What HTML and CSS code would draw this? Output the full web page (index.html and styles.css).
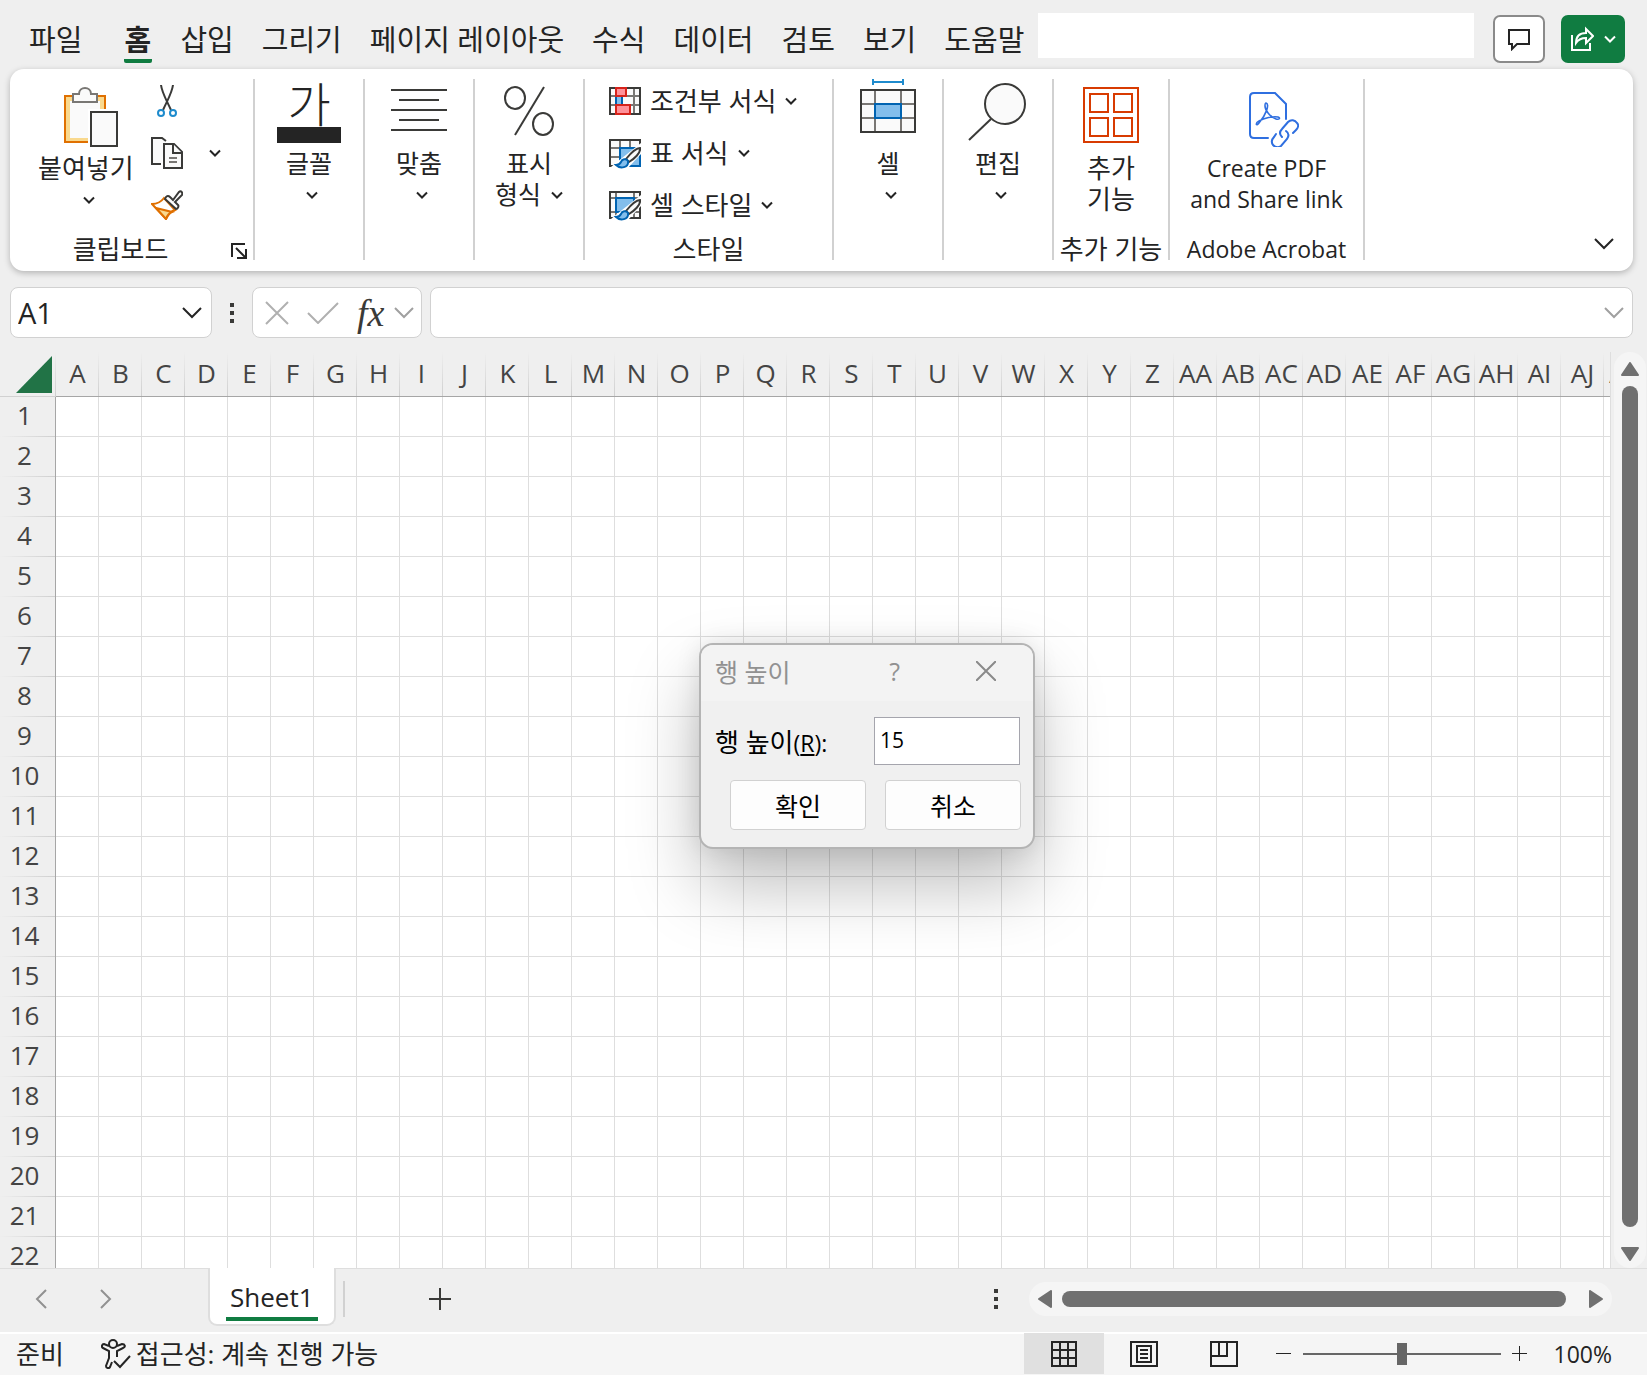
FILE: index.html
```html
<!DOCTYPE html>
<html lang="ko">
<head>
  <meta charset="UTF-8" />
  <meta name="viewport" content="width=device-width, initial-scale=1.0" />
  <title>Excel</title>
  <link rel="stylesheet" href="styles.css">
</head>
<body>
  <svg class="defs" aria-hidden="true">
    <symbol id="caret" viewBox="0 0 12 8"><path d="M1 1.5l5 5 5-5" fill="none" stroke="currentColor" stroke-width="2"/></symbol>
    <symbol id="chevron" viewBox="0 0 20 12"><path d="M1 1l9 9 9-9" fill="none" stroke="currentColor" stroke-width="2"/></symbol>
    <symbol id="brush" viewBox="0 0 32 32">
      <path d="M32 6L8 25l-6 5 16 2 14-15z" fill="#fff"/>
      <path d="M31 11c-4 0-10 6-14 11l3 3c5-3 12-9 11-14z" fill="#fafafa" stroke="#3a3a38" stroke-width="2"/>
      <path d="M19 24c-2-3-6-2-7 1-1 2-3 3-5 3 4 4 13 3 12-4z" fill="#83beec" stroke="#0063b1" stroke-width="2"/>
    </symbol>
  </svg>

  <header class="topbar">
    <nav class="tabs">
      <a class="tab file" href="#">파일</a>
      <a class="tab active" href="#">홈</a>
      <a class="tab" href="#">삽입</a>
      <a class="tab" href="#">그리기</a>
      <a class="tab" href="#">페이지 레이아웃</a>
      <a class="tab" href="#">수식</a>
      <a class="tab" href="#">데이터</a>
      <a class="tab" href="#">검토</a>
      <a class="tab" href="#">보기</a>
      <a class="tab" href="#">도움말</a>
    </nav>
    <input class="search" type="text" aria-label="검색">
    <button class="comment" aria-label="메모">
      <svg width="24" height="24" viewBox="0 0 24 24" fill="none" stroke="#242424" stroke-width="2"><path d="M2 3h20v14H10l-5 5v-5H2z"/></svg>
    </button>
    <button class="share" aria-label="공유">
      <svg width="24" height="26" viewBox="0 0 24 26" fill="none" stroke="#fff" stroke-width="2"><path d="M2 9v15h18v-7"/><path d="M6 17c0-7 4-10 10-10V3l7 7-7 7v-5c-5 0-8 2-10 5z"/></svg>
      <svg width="12" height="8"><use href="#caret"/></svg>
    </button>
  </header>

  <section class="ribbon">
    <div class="group clipboard">
      <div class="group-body">
        <button class="big low">
          <svg width="64" height="60" viewBox="-10 0 64 60">
            <path d="M1 9h40v46H1z" fill="#f9d98e" stroke="#e07000" stroke-width="2"/>
            <path d="M6 14h30v37H6z" fill="#fafafa"/>
            <path d="M9 7h6c0-8 12-8 12 0h6v8H9z" fill="#fafafa" stroke="#797774" stroke-width="2"/>
            <path d="M24 22h30v38H24z" fill="#fff"/>
            <path d="M27 25h26v34H27z" fill="#fafafa" stroke="#3a3a38" stroke-width="2"/>
          </svg>
          <span>붙여넣기</span>
          <svg class="caret" width="12" height="8"><use href="#caret"/></svg>
        </button>
        <div class="rows">
          <button class="row" aria-label="잘라내기">
            <svg width="32" height="32" viewBox="0 0 32 32" fill="none">
              <path d="M10 0c1 8 5 14 10 25M22 0c-1 8-5 14-10 25" stroke="#3a3a38" stroke-width="2"/>
              <circle cx="10" cy="28" r="3" stroke="#1e8bcd" stroke-width="2"/><circle cx="22" cy="28" r="3" stroke="#1e8bcd" stroke-width="2"/>
            </svg>
          </button>
          <button class="row copy" aria-label="복사">
            <svg width="32" height="32" viewBox="0 0 32 32" fill="#fafafa" stroke="#3a3a38" stroke-width="2">
              <path d="M10 27H1V1h10l4 3"/><path d="M13 7h10l8 8v16H13z"/><path d="M22 7v9h9"/><path d="M18 21h8M18 25h8" stroke="#797774"/>
            </svg>
            <svg class="caret" width="12" height="8"><use href="#caret"/></svg>
          </button>
          <button class="row" aria-label="서식 복사">
            <svg width="32" height="30" viewBox="0 0 32 30" stroke-width="2">
              <path d="M1 14c5 0 9-2 12-6l11 12c-4 1-7 5-9 9z" fill="#fff" stroke="#e07000"/>
              <path d="M5 18l16 4c-3 1-5 4-6 7z" fill="#f9d98e" stroke="#e07000"/>
              <path d="M14 9c1-3 3-4 5-2l3 3 6-8c2-2 4 1 3 3l-7 7 3 3c1 1 0 4-2 4z" fill="#fff" stroke="#3a3a38"/>
            </svg>
          </button>
        </div>
      </div>
      <div class="group-label">
        <span>클립보드</span>
        <button class="launcher" aria-label="클립보드 옵션">
          <svg width="16" height="16" viewBox="0 0 16 16" fill="none" stroke="#242424" stroke-width="2"><path d="M1 14V1h13M5 5l10 10M6 15h9V6"/></svg>
        </button>
      </div>
    </div>

    <div class="group">
      <button class="big">
        <span class="font-icon"><b>가</b></span>
        <span>글꼴</span>
        <svg class="caret" width="12" height="8"><use href="#caret"/></svg>
      </button>
    </div>

    <div class="group">
      <button class="big">
        <svg width="56" height="60" viewBox="0 0 56 60" stroke="#3a3a38" stroke-width="2"><path d="M0 7h56M8 17h40M0 27h56M8 37h40M0 47h56"/></svg>
        <span>맞춤</span>
        <svg class="caret" width="12" height="8"><use href="#caret"/></svg>
      </button>
    </div>

    <div class="group">
      <button class="big">
        <svg width="50" height="60" viewBox="0 0 50 60" fill="none" stroke="#3a3a38" stroke-width="2"><ellipse cx="11" cy="15" rx="10" ry="11"/><ellipse cx="39" cy="41" rx="10" ry="11"/><path d="M40 4L11 52"/></svg>
        <span>표시</span>
        <span class="with-caret">형식 <svg width="12" height="8"><use href="#caret"/></svg></span>
      </button>
    </div>

    <div class="group styles">
      <div class="rows">
        <button class="row">
          <svg width="32" height="32" viewBox="0 0 32 32" stroke-width="2">
            <path d="M1 3h30v26H1z" fill="#fafafa" stroke="#3a3a38"/><path d="M1 11h30M1 20h30M25 3v26M7 3v26" stroke="#797774"/>
            <path d="M1 3h30v26H1z" fill="none" stroke="#3a3a38"/>
            <path d="M7 11h6v9H7z" fill="#83beec" stroke="#0063b1"/><path d="M7 3h10v8H7zM7 20h14v9H7z" fill="#ff9199" stroke="#d6231b"/>
          </svg>
          조건부 서식
          <svg width="12" height="8"><use href="#caret"/></svg>
        </button>
        <button class="row">
          <svg width="32" height="32" viewBox="0 0 32 32" stroke-width="2">
            <path d="M1 3h30v26H1z" fill="#fafafa"/><path d="M1 11h30M1 20h30M11 3v26M21 3v26" stroke="#797774"/>
            <path d="M1 3h30v26H1z" fill="none" stroke="#3a3a38"/>
            <path d="M11 11h20v18H11z" fill="#83beec" stroke="#0063b1"/><use href="#brush"/>
          </svg>
          표 서식
          <svg width="12" height="8"><use href="#caret"/></svg>
        </button>
        <button class="row">
          <svg width="32" height="32" viewBox="0 0 32 32" stroke-width="2">
            <path d="M1 3h30v26H1z" fill="#fafafa"/><path d="M1 9h30M1 23h30M7 3v26M25 3v26" stroke="#797774"/>
            <path d="M1 3h30v26H1z" fill="none" stroke="#3a3a38"/>
            <path d="M7 9h18v14H7z" fill="#83beec" stroke="#0063b1"/><use href="#brush"/>
          </svg>
          셀 스타일
          <svg width="12" height="8"><use href="#caret"/></svg>
        </button>
      </div>
      <div class="group-label"><span>스타일</span></div>
    </div>

    <div class="group">
      <button class="big">
        <svg class="tall" width="56" height="64" viewBox="0 0 56 64" fill="none" stroke-width="2">
          <path d="M13 0v6M43 0v6M13 3h30" stroke="#1e8bcd"/>
          <path d="M1 11h54v42H1z" fill="#fafafa" stroke="#3a3a38"/><path d="M15 11v42M41 11v42M1 25h54M1 39h54" stroke="#797774"/>
          <path d="M1 11h54v42H1z" stroke="#3a3a38"/><path d="M15 25h26v14H15z" fill="#83beec" stroke="#0063b1"/>
        </svg>
        <span>셀</span>
        <svg class="caret" width="12" height="8"><use href="#caret"/></svg>
      </button>
    </div>

    <div class="group">
      <button class="big">
        <svg width="60" height="60" viewBox="0 0 60 60" fill="#fafafa" stroke="#3a3a38" stroke-width="2"><circle cx="37" cy="21" r="20"/><path d="M23 36L1 57"/></svg>
        <span>편집</span>
        <svg class="caret" width="12" height="8"><use href="#caret"/></svg>
      </button>
    </div>

    <div class="group addins">
      <button class="big low">
        <svg width="56" height="60" viewBox="0 0 56 60" fill="none" stroke="#d83b01" stroke-width="2"><path d="M1 1h54v54H1zM7 7h18v18H7zM31 7h18v18H31zM7 31h18v18H7zM31 31h18v18H31z"/></svg>
        <span>추가</span>
        <span>기능</span>
      </button>
      <div class="group-label"><span>추가 기능</span></div>
    </div>

    <div class="group acrobat">
      <button class="big low">
        <svg width="64" height="60" viewBox="-14 -1 64 60" fill="none" stroke="#2f6fe0" stroke-width="2" stroke-linecap="round">
          <path d="M19 50H5q-4 0-4-4V9q0-4 4-4h21l11 11v15"/>
          <path d="M17 15c4 1 0 12-7 20-3 4-4 0 0-2 5-3 14-5 19-4 3 1 1 3-2 2-6-2-11-9-11-13 0-2 0-3 1-3z" stroke-width="1.6"/>
          <path d="M33 49c-3-3-2-6 0-8l6-7c3-3 7-2 9 1 2 2 1 5-1 7l-3 3M37 43c3 2 3 5 1 8l-6 7c-3 2-6 1-8-1-2-3-1-6 1-8l2-3"/>
        </svg>
        <span>Create PDF</span>
        <span>and Share link</span>
      </button>
      <div class="group-label"><span>Adobe Acrobat</span></div>
    </div>

    <button class="collapse" aria-label="리본 축소"><svg width="20" height="12"><use href="#chevron"/></svg></button>
  </section>

  <section class="formula-bar">
    <div class="field name-box">
      <input type="text" value="A1" aria-label="이름 상자">
      <button aria-label="이름 목록"><svg width="20" height="12"><use href="#chevron"/></svg></button>
    </div>
    <span class="dots"><i></i><i></i><i></i></span>
    <div class="field actions">
      <button aria-label="취소"><svg width="24" height="24" viewBox="0 0 24 24" stroke="#b0b0b0" stroke-width="2"><path d="M1 1l22 22M23 1L1 23"/></svg></button>
      <button aria-label="입력"><svg width="32" height="22" viewBox="0 0 32 22" fill="none" stroke="#b0b0b0" stroke-width="2"><path d="M1 11l10 10L31 1"/></svg></button>
      <button class="fx">fx</button>
      <button class="dim" aria-label="함수 목록"><svg width="20" height="12"><use href="#chevron"/></svg></button>
    </div>
    <div class="field formula">
      <input type="text" aria-label="수식">
      <button class="dim" aria-label="수식 입력줄 확장"><svg width="20" height="12"><use href="#chevron"/></svg></button>
    </div>
  </section>

  <main class="workspace">
    <div class="sheet">
      <table class="grid">
        <thead><tr id="columns"><th class="corner"><svg width="36" height="37" viewBox="0 0 36 37"><path d="M36 0v37H0z" fill="#217346"/></svg></th></tr></thead>
        <tbody id="rows"></tbody>
      </table>
    </div>
    <div class="vscroll">
      <svg width="18" height="14" viewBox="0 0 18 14"><path d="M9 1l8 12H1z"/></svg>
      <div class="thumb"></div>
      <svg width="18" height="14" viewBox="0 0 18 14"><path d="M9 13L17 1H1z"/></svg>
    </div>
  </main>

  <section class="sheetbar">
    <div class="sheet-nav">
      <button aria-label="이전 시트"><svg width="12" height="20" viewBox="0 0 12 20"><path d="M11 1l-9 9 9 9"/></svg></button>
      <button aria-label="다음 시트"><svg width="12" height="20" viewBox="0 0 12 20"><path d="M1 1l9 9-9 9"/></svg></button>
    </div>
    <button class="sheet-tab"><span>Sheet1</span></button>
    <span class="divider"></span>
    <button class="add-sheet" aria-label="새 시트"><svg width="22" height="22" viewBox="0 0 22 22" stroke="#3a3a38" stroke-width="2"><path d="M11 0v22M0 11h22"/></svg></button>
    <span class="dots"><i></i><i></i><i></i></span>
    <div class="hscroll">
      <svg width="14" height="18" viewBox="0 0 14 18"><path d="M1 9l12-8v16z"/></svg>
      <div class="thumb"></div>
      <svg width="14" height="18" viewBox="0 0 14 18"><path d="M13 9L1 1v16z"/></svg>
    </div>
  </section>

  <footer class="statusbar">
    <span class="ready">준비</span>
    <svg width="30" height="30" viewBox="0 0 30 30" fill="none" stroke="#242424" stroke-width="2"><circle cx="12" cy="5" r="4"/><path d="M8 7L3 5c-2 0-3 3-1 4l6 3v7L5 27c0 2 3 3 4 1l2-5M16 7l5-2c3 0 4 3 1 4l-6 3v6"/><path d="M13 22l6 6 10-11"/></svg>
    <span class="access">접근성: 계속 진행 가능</span>
    <div class="views">
      <button class="view active" aria-label="기본"><svg width="26" height="26" viewBox="0 0 26 26" fill="none" stroke="#242424" stroke-width="2"><path d="M1 1h24v24H1zM9 1v24M17 1v24M1 9h24M1 17h24"/></svg></button>
      <button class="view" aria-label="페이지 레이아웃 보기"><svg width="28" height="26" viewBox="0 0 28 26" fill="none" stroke="#242424" stroke-width="2"><path d="M1 1h26v24H1zM7 5h14v16H7zM10 9h8M10 13h8M10 17h8"/></svg></button>
      <button class="view" aria-label="페이지 나누기"><svg width="28" height="26" viewBox="0 0 28 26" fill="none" stroke="#242424" stroke-width="2"><path d="M1 1h26v24H1zM9 1v14M17 1v14M1 15h17"/></svg></button>
    </div>
    <div class="zoom">
      <button aria-label="축소"><svg width="15" height="16" viewBox="0 0 15 16" stroke="#242424"><path d="M0 7.5h15"/></svg></button>
      <input type="range" min="10" max="190" value="100" aria-label="확대/축소">
      <button aria-label="확대"><svg width="15" height="16" viewBox="0 0 15 16" stroke="#242424"><path d="M0 7.5h15M7.5 0v15"/></svg></button>
      <span class="percent">100%</span>
    </div>
  </footer>

  <div class="dialog" role="dialog" aria-labelledby="dialogTitle">
    <div class="dialog-title">
      <span id="dialogTitle">행 높이</span>
      <button class="help">?</button>
      <button aria-label="닫기"><svg width="20" height="20" viewBox="0 0 20 20" stroke="#8a8a8a" stroke-width="2"><path d="M0 0l20 20M20 0L0 20"/></svg></button>
    </div>
    <div class="dialog-row">
      <label for="rowHeight">행 높이<small>(<u>R</u>):</small></label>
      <input id="rowHeight" type="text" value="15">
    </div>
    <div class="dialog-buttons">
      <button>확인</button>
      <button>취소</button>
    </div>
  </div>

  <script>
    const COLS = 37;
    const ROWS = 22;

    function columnName(i) {
      const last = String.fromCharCode(65 + i % 26);
      return i < 26 ? last : String.fromCharCode(64 + Math.floor(i / 26)) + last;
    }

    const columns = document.getElementById('columns');
    for (let c = 0; c < COLS; c++) {
      const th = document.createElement('th');
      th.textContent = columnName(c);
      columns.appendChild(th);
    }

    const rows = document.getElementById('rows');
    for (let r = 1; r <= ROWS; r++) {
      const tr = document.createElement('tr');
      tr.innerHTML = '<th>' + r + '</th>' + '<td></td>'.repeat(COLS);
      rows.appendChild(tr);
    }
  </script>
</body>
</html>
```

FILE: styles.css
```css
:root {
  --bg: #efefef;
  --text: #242424;
  --green: #107c41;
  --border: #d1d1d1;
  --line: #dedede;
  --thumb: #707070;
}
* {
  box-sizing: border-box;
}
body {
  margin: 0;
  height: 100vh;
  display: flex;
  flex-direction: column;
  overflow: hidden;
  position: relative;
  font-family: 'Open Sans', 'Noto Sans CJK KR', sans-serif;
  font-size: 25px;
  background: var(--bg);
  color: var(--text);
}
button,
input {
  font: inherit;
  color: inherit;
  background: none;
  border: none;
  padding: 0;
  margin: 0;
}
button {
  cursor: pointer;
}
svg {
  display: block;
  flex: none;
}
.defs {
  position: absolute;
  width: 0;
  height: 0;
}

/* tabs */
.topbar {
  display: flex;
  align-items: flex-start;
  padding: 13px 22px 6px 29px;
}
.tabs {
  display: flex;
  gap: 28px;
}
.tab {
  height: 50px;
  padding-top: 4px;
  font-size: 29px;
  line-height: 46px;
  color: var(--text);
  text-decoration: none;
  white-space: nowrap;
}
.tab.file {
  margin-right: 14px;
}
.tab.active {
  width: 28px;
  font-weight: bold;
  border-bottom: 4px solid var(--green);
  border-radius: 2px;
}
.search {
  flex: 1;
  min-width: 0;
  height: 45px;
  margin: 0 19px 0 14px;
  background: #fff;
}
.comment,
.share {
  display: flex;
  align-items: center;
  justify-content: center;
  height: 48px;
  margin-top: 2px;
  border-radius: 7px;
}
.comment {
  width: 52px;
  margin-right: 16px;
  background: #fff;
  border: 2px solid #8a8a8a;
}
.share {
  width: 64px;
  gap: 10px;
  background: var(--green);
  color: #fff;
}

/* ribbon */
.ribbon {
  display: flex;
  margin: 0 14px 0 10px;
  padding: 10px 0 11px;
  background: #fff;
  border-radius: 14px;
  box-shadow: 0 2px 6px rgba(0, 0, 0, 0.25);
}
.group {
  display: flex;
  flex-direction: column;
  width: 110px;
  height: 181px;
  border-right: 2px solid var(--border);
}
.group.clipboard {
  width: 245px;
}
.group.styles {
  width: 249px;
}
.group.addins {
  width: 116px;
}
.group.acrobat {
  width: 195px;
}
.group-body {
  display: flex;
  gap: 17px;
  padding-left: 28px;
}
.big {
  display: flex;
  flex-direction: column;
  align-items: center;
  padding-top: 4px;
  line-height: 31px;
  white-space: nowrap;
}
.big > span {
  height: 31px;
}
.big > :first-child {
  height: 60px;
  margin-bottom: 5px;
}
.big.low {
  padding-top: 8px;
}
.big.low > :first-child {
  margin-bottom: 6px;
}
.big > .tall {
  height: 64px;
  margin-top: -4px;
}
.big .caret {
  margin: 12px 0 0 6px;
}
.big .with-caret {
  display: flex;
  align-items: center;
  gap: 10px;
}
.clipboard,
.styles,
.addins {
  font-size: 26px;
}
.acrobat {
  font-size: 23px;
}
.font-icon {
  width: 64px;
  border-bottom: 16px solid var(--text);
}
.font-icon b {
  display: block;
  font-size: 47px;
  font-weight: 300;
  line-height: 42px;
}
.rows {
  display: flex;
  flex-direction: column;
  gap: 8px;
}
.row {
  display: flex;
  align-items: center;
  gap: 9px;
  height: 44px;
  line-height: 32px;
  white-space: nowrap;
}
.row.copy {
  gap: 26px;
}
.styles .rows {
  padding-left: 24px;
}
.group-label {
  display: flex;
  justify-content: center;
  align-items: center;
  height: 22px;
  margin-top: auto;
  line-height: 22px;
  white-space: nowrap;
}
.clipboard .group-label span {
  flex: 1;
  text-align: center;
}
.launcher {
  margin: 4px 6px 0 0;
}
.collapse {
  margin: auto 19px 10px auto;
}

/* formula bar */
.formula-bar {
  display: flex;
  align-items: center;
  padding: 16px 14px 14px 10px;
}
.field {
  display: flex;
  align-items: center;
  height: 51px;
  background: #fff;
  border: 1px solid var(--border);
  border-radius: 8px;
}
.field input {
  flex: 1;
  min-width: 0;
}
.name-box {
  width: 202px;
  padding: 0 9px 0 7px;
  font-size: 29px;
}
.dots {
  display: flex;
  flex-direction: column;
  gap: 4px;
}
.dots i {
  width: 4px;
  height: 4px;
  background: #3a3a38;
}
.formula-bar .dots {
  margin: 0 18px;
}
.actions {
  gap: 18px;
  width: 170px;
  padding-left: 12px;
}
.fx {
  font: italic 38px 'Liberation Serif', serif;
  line-height: 40px;
  color: #3a3a38;
}
.actions .dim {
  margin: 0 4px 0 -8px;
}
.dim {
  color: #a0a0a0;
}
.formula {
  flex: 1;
  margin-left: 8px;
  padding: 0 8px;
}

/* grid */
.workspace {
  flex: 1;
  display: flex;
  min-height: 0;
}
.sheet {
  flex: 1;
  min-width: 0;
  overflow: hidden;
  border-right: 1px solid var(--line);
}
.grid {
  width: 1647px;
  table-layout: fixed;
  border-collapse: separate;
  border-spacing: 0;
  color: #444;
  font-size: 26px;
}
.grid th,
.grid td {
  height: 40px;
  padding: 0;
  font-weight: normal;
  line-height: 36px;
}
.grid td {
  background: #fff;
  border-right: 1px solid var(--line);
  border-bottom: 1px solid var(--line);
}
.grid thead th {
  width: 43px;
  height: 45px;
  padding-bottom: 2px;
  border-bottom: 1px solid #a6a6a6;
  background: linear-gradient(var(--bg), #cfcfcf) right / 1px 100% no-repeat;
}
.grid thead .corner {
  width: 56px;
  padding: 0 4px 0 16px;
  border-bottom-color: var(--border);
}
.grid tbody th {
  width: 56px;
  padding: 0 6px 4px 0;
  border-right: 1px solid #a6a6a6;
  background: linear-gradient(to right, var(--bg), #cfcfcf) bottom / 100% 1px no-repeat;
}
.thumb {
  flex: 1;
  background: var(--thumb);
  border-radius: 8px;
}
.vscroll,
.hscroll {
  display: flex;
  align-items: center;
  background: #f5f5f5;
  border-radius: 17px;
  fill: var(--thumb);
  stroke: var(--thumb);
  stroke-width: 2;
  stroke-linejoin: round;
}
.vscroll {
  flex-direction: column;
  width: 32px;
  margin: 0 1px 0 3px;
  padding: 10px 0 7px;
}
.vscroll .thumb {
  width: 16px;
  margin: 10px 0 20px;
}

/* sheet tabs */
.sheetbar {
  display: flex;
  align-items: center;
  height: 64px;
  padding: 0 35px 4px 0;
  border-top: 1px solid var(--line);
}
.sheet-nav {
  display: flex;
  gap: 53px;
  width: 208px;
  padding-left: 35px;
  fill: none;
  stroke: #919191;
  stroke-width: 2;
}
.sheet-tab {
  align-self: flex-start;
  height: 58px;
  margin-top: -1px;
  padding: 6px 16px 0;
  background: #fff;
  border: solid var(--line);
  border-width: 0 2px 2px;
  border-radius: 0 0 9px 9px;
}
.sheet-tab span {
  display: block;
  height: 43px;
  padding: 0 4px;
  border-bottom: 4px solid var(--green);
  font-size: 26px;
  line-height: 38px;
}
.divider {
  width: 2px;
  height: 36px;
  margin: 0 84px 0 7px;
  background: var(--border);
}
.sheetbar .dots {
  margin: 0 31px 0 auto;
}
.hscroll {
  width: 583px;
  height: 34px;
  padding: 0 9px;
}
.hscroll .thumb {
  height: 16px;
  margin: 0 23px 0 10px;
}

/* status bar */
.statusbar {
  display: flex;
  align-items: center;
  height: 43px;
  padding: 0 35px 2px 16px;
  border-top: 2px solid #fff;
  background: #f5f5f5;
  font-size: 26px;
  line-height: 36px;
  white-space: nowrap;
}
.ready {
  margin-right: 37px;
}
.access {
  margin-left: 5px;
}
.views {
  display: flex;
  margin-left: auto;
}
.view {
  display: flex;
  align-items: center;
  justify-content: center;
  width: 80px;
  height: 41px;
}
.view.active {
  background: #e0e0e0;
}
.zoom {
  display: flex;
  align-items: center;
  margin-left: 12px;
}
.zoom input {
  appearance: none;
  width: 198px;
  height: 22px;
  margin: 0 11px 0 12px;
  background: linear-gradient(#666, #666) center / 100% 2px no-repeat;
}
.zoom input::-webkit-slider-thumb {
  appearance: none;
  width: 10px;
  height: 22px;
  background: #666;
}
.percent {
  margin-left: 27px;
  font-size: 23px;
}

/* row height dialog */
.dialog {
  position: absolute;
  left: 699px;
  top: 643px;
  width: 336px;
  background: #f0f0f0;
  border: 2px solid #b4b4b4;
  border-radius: 14px;
  box-shadow: 0 36px 70px rgba(0, 0, 0, 0.26), 0 0 24px rgba(0, 0, 0, 0.1);
  color: #000;
  overflow: hidden;
}
.dialog-title {
  display: flex;
  align-items: center;
  height: 56px;
  padding: 0 37px 4px 14px;
  background: #f3f3f3;
  color: #919191;
}
.help {
  margin: 0 76px 0 auto;
}
.dialog-row {
  display: flex;
  align-items: center;
  justify-content: space-between;
  padding: 16px 13px 15px 14px;
}
.dialog-row label {
  font-size: 26px;
}
.dialog-row small {
  font-size: 23px;
}
.dialog-row input {
  width: 146px;
  height: 48px;
  padding: 0 5px 2px;
  background: #fff;
  border: 1px solid #a5a5ad;
  font-size: 21px;
}
.dialog-buttons {
  display: flex;
  justify-content: flex-end;
  gap: 19px;
  padding: 0 12px 17px;
}
.dialog-buttons button {
  width: 136px;
  height: 50px;
  background: #fdfdfd;
  border: 1px solid var(--border);
  border-radius: 4px;
}
```
